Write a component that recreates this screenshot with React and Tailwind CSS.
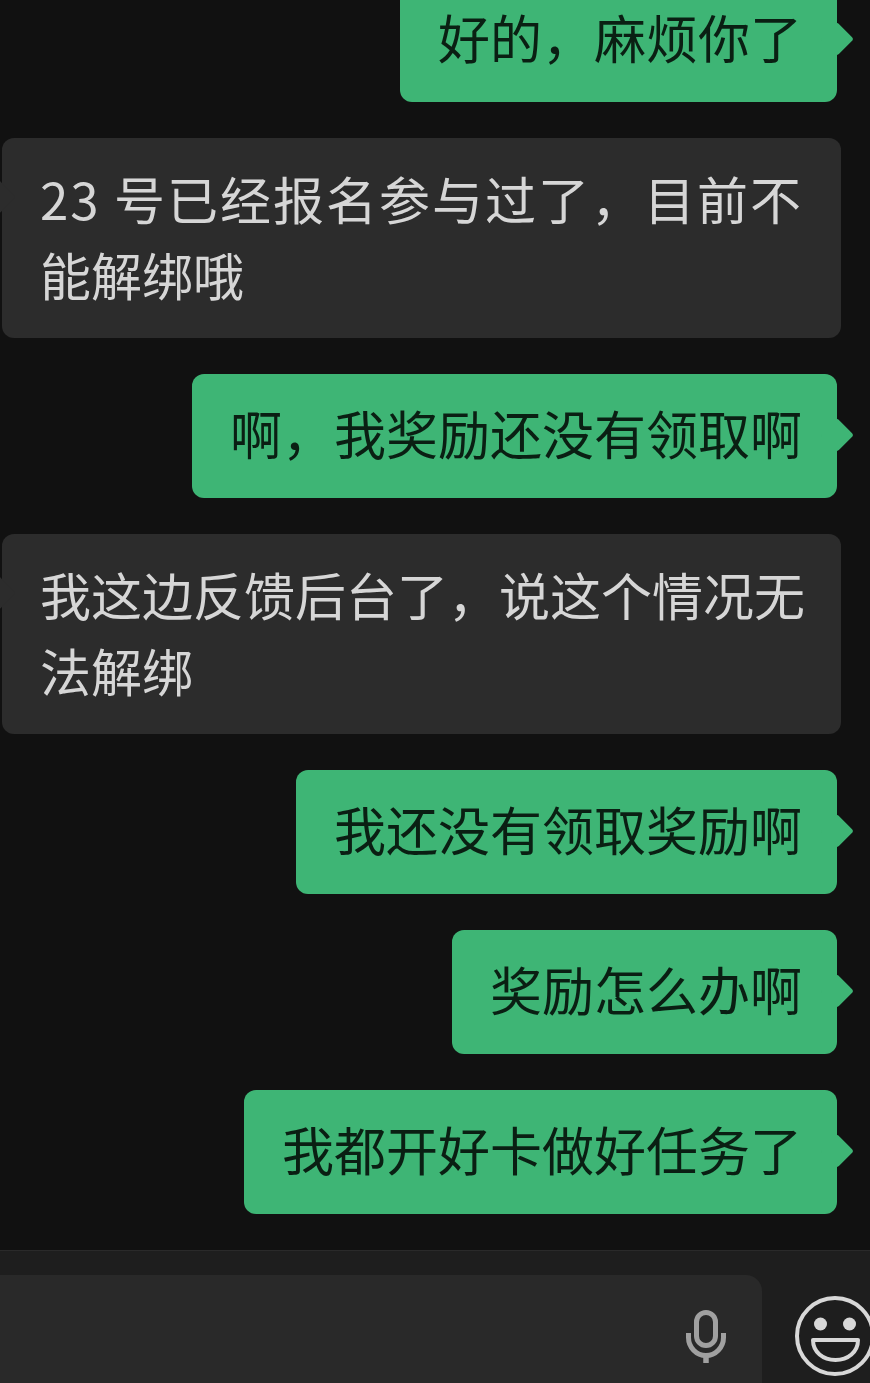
const messages = [
  { id: 1, mine: true, lines: ["好的，麻烦你了"], first: true },
  { id: 2, mine: false, lines: ["23 号已经报名参与过了，目前不", "能解绑哦"], wide: true },
  { id: 3, mine: true, lines: ["啊，我奖励还没有领取啊"] },
  { id: 4, mine: false, lines: ["我这边反馈后台了，说这个情况无", "法解绑"] },
  { id: 5, mine: true, lines: ["我还没有领取奖励啊"] },
  { id: 6, mine: true, lines: ["奖励怎么办啊"] },
  { id: 7, mine: true, lines: ["我都开好卡做好任务了"] },
];

const Bubble = ({ mine, lines, first, wide }) => {
  if (mine) {
    return (
      <div className={`relative self-end mr-[33px] w-fit rounded-xl bg-[#3eb575] pl-[38px] pr-[35px] pt-[21px] pb-[27px] text-[52px] leading-[76px] text-[#0a1f13] whitespace-nowrap ${first ? "-mt-[22px]" : ""}`}>
        <div className="absolute top-[49px] -right-[12px] h-6 w-6 rotate-45 rounded-[3px] bg-[#3eb575]"></div>
        <div className="relative">{lines[0]}</div>
      </div>
    );
  }
  return (
    <div className="relative ml-[2px] w-[839px] rounded-xl bg-[#2c2c2c] pl-[38px] pt-[22px] pb-[26px] text-[51px] leading-[76px] text-[#d6d6d6] whitespace-nowrap">
      <div className="absolute top-[47px] -left-[15px] h-6 w-6 rotate-45 rounded-[3px] bg-[#2c2c2c]"></div>
      {lines.map((line, i) => (
        <div key={line} className={`relative ${wide && i === 0 ? "tracking-[2px]" : ""}`}>{line}</div>
      ))}
    </div>
  );
};

const MicIcon = () => (
  <svg width="40" height="53" viewBox="0 0 40 53" fill="none" stroke="#a0a0a0" strokeWidth="5">
    <rect x="10.5" y="2.500" width="19" height="33" rx="9.500" />
    <path d="M2.500 23v4.500a17.500 18 0 0 0 35 0v-4.500" />
    <path d="M20 45v8" strokeWidth="5.500" />
  </svg>
);

const SmileIcon = () => (
  <svg width="80" height="80" viewBox="0 0 80 80" fill="none" className="shrink-0">
    <circle cx="40" cy="40" r="38" stroke="#d8d8d8" strokeWidth="4" />
    <circle cx="25.500" cy="28" r="6.500" fill="#d8d8d8" />
    <circle cx="54.500" cy="28" r="6.500" fill="#d8d8d8" />
    <path d="M18 44h45c0 12-10 20-22.500 20S18 56 18 44z" stroke="#d8d8d8" strokeWidth="4" strokeLinejoin="round" />
  </svg>
);

export default function App() {
  return (
    <div className="flex h-[1383px] w-[870px] flex-col overflow-hidden bg-[#111111] font-['Noto_Sans_CJK_SC','Noto_Sans',sans-serif]">
      {/* 消息列表 */}
      <div className="flex h-[1250px] shrink-0 flex-col gap-9 overflow-hidden">
        {messages.map((m) => (
          <Bubble key={m.id} mine={m.mine} lines={m.lines} first={m.first} wide={m.wide} />
        ))}
      </div>

      {/* 输入栏 */}
      <div className="flex flex-1 items-start border-t border-[#2a2a2a] bg-[#1e1e1e] pt-6">
        <div className="flex h-[120px] w-[762px] shrink-0 items-start justify-end rounded-tr-2xl bg-[#292929] pr-[36px] pt-[35px]">
          <MicIcon />
        </div>
        <div className="ml-[33px] mt-[21px]">
          <SmileIcon />
        </div>
      </div>
    </div>
  );
}
